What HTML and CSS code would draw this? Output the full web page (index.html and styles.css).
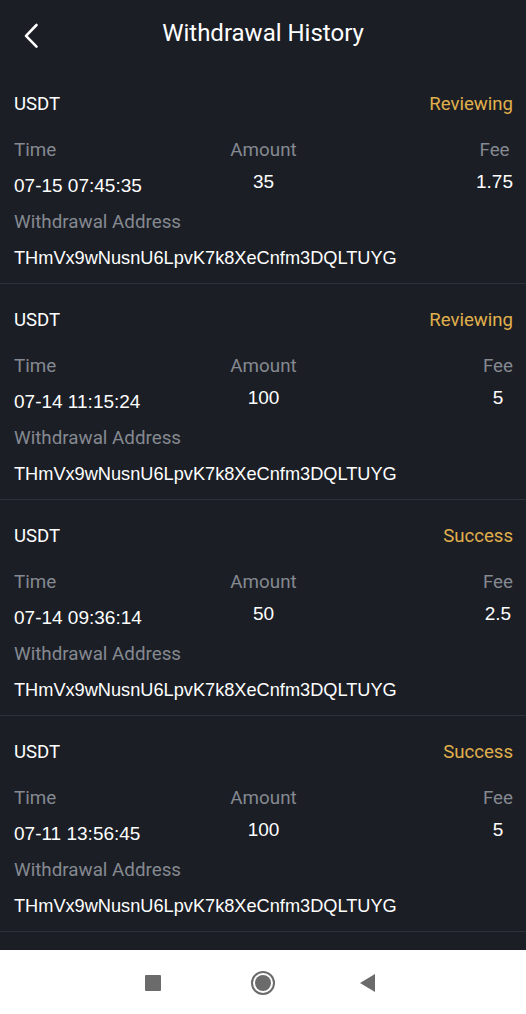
FILE: index.html
```html
<!DOCTYPE html>
<html>
<head>
<meta charset="utf-8">
<link rel="stylesheet" href="styles.css">
</head>
<body>
<div class="screen">
  <header class="topbar">
    <svg class="back" width="16" height="26" viewBox="0 0 16 26"><path d="M13.5 2 L3 12.8 L13.5 23.6" fill="none" stroke="#fff" stroke-width="2.6" stroke-linecap="round" stroke-linejoin="round"/></svg>
    <h1 class="title">Withdrawal History</h1>
  </header>
  <main class="list">
    <section class="card">
      <div class="head"><span class="coin">USDT</span><span class="status">Reviewing</span></div>
      <div class="cols">
        <div class="col col-left"><span class="label">Time</span><span class="value">07-15 07:45:35</span></div>
        <div class="col col-mid"><span class="label">Amount</span><span class="value">35</span></div>
        <div class="col col-right"><span class="label">Fee</span><span class="value">1.75</span></div>
      </div>
      <div class="label addr-label">Withdrawal Address</div>
      <div class="addr">THmVx9wNusnU6LpvK7k8XeCnfm3DQLTUYG</div>
    </section>
    <section class="card">
      <div class="head"><span class="coin">USDT</span><span class="status">Reviewing</span></div>
      <div class="cols">
        <div class="col col-left"><span class="label">Time</span><span class="value">07-14 11:15:24</span></div>
        <div class="col col-mid"><span class="label">Amount</span><span class="value">100</span></div>
        <div class="col col-right"><span class="label">Fee</span><span class="value">5</span></div>
      </div>
      <div class="label addr-label">Withdrawal Address</div>
      <div class="addr">THmVx9wNusnU6LpvK7k8XeCnfm3DQLTUYG</div>
    </section>
    <section class="card">
      <div class="head"><span class="coin">USDT</span><span class="status">Success</span></div>
      <div class="cols">
        <div class="col col-left"><span class="label">Time</span><span class="value">07-14 09:36:14</span></div>
        <div class="col col-mid"><span class="label">Amount</span><span class="value">50</span></div>
        <div class="col col-right"><span class="label">Fee</span><span class="value">2.5</span></div>
      </div>
      <div class="label addr-label">Withdrawal Address</div>
      <div class="addr">THmVx9wNusnU6LpvK7k8XeCnfm3DQLTUYG</div>
    </section>
    <section class="card">
      <div class="head"><span class="coin">USDT</span><span class="status">Success</span></div>
      <div class="cols">
        <div class="col col-left"><span class="label">Time</span><span class="value">07-11 13:56:45</span></div>
        <div class="col col-mid"><span class="label">Amount</span><span class="value">100</span></div>
        <div class="col col-right"><span class="label">Fee</span><span class="value">5</span></div>
      </div>
      <div class="label addr-label">Withdrawal Address</div>
      <div class="addr">THmVx9wNusnU6LpvK7k8XeCnfm3DQLTUYG</div>
    </section>
  </main>
  <nav class="navbar">
    <svg class="nav-square" width="18" height="18" viewBox="0 0 18 18"><rect x="1" y="1" width="16" height="16" rx="1" fill="#6b6b6b"/></svg>
    <svg class="nav-home" width="26" height="26" viewBox="0 0 26 26"><circle cx="13" cy="13" r="11" fill="none" stroke="#6b6b6b" stroke-width="2"/><circle cx="13" cy="13" r="8" fill="#6b6b6b"/></svg>
    <svg class="nav-back" width="18" height="20" viewBox="0 0 18 20"><path d="M16 1 L16 19 L1 10 Z" fill="#6b6b6b"/></svg>
  </nav>
</div>
</body>
</html>
```
FILE: styles.css
```css
* { box-sizing: border-box; margin: 0; padding: 0; }
html, body { background: #1b1e25; }
body { width: 526px; height: 1014px; overflow: hidden; font-family: Roboto, "Liberation Sans", sans-serif; }
.screen { display: flex; flex-direction: column; height: 1014px; }
.topbar { height: 68px; display: flex; align-items: center; justify-content: center; position: relative; }
.back { position: absolute; left: 23px; top: 23px; }
.title { font-weight: 400; font-size: 24px; color: #fff; line-height: 28px; margin-top: -2px; }
.list { flex: 1; }
.card { padding: 22px 13px 0 14px; border-bottom: 1px solid #2c3038; height: 216px; }
.head { display: flex; justify-content: space-between; align-items: center; height: 28px; }
.coin { color: #fff; font-size: 18.6px; }
.status { color: #e0b04c; font-size: 18.6px; }
.label { color: #858991; font-size: 18.8px; line-height: 28px; }
.cols { display: grid; grid-template-columns: 1fr auto 1fr; margin-top: 18px; }
.col { display: flex; flex-direction: column; gap: 7px; }
.col-left { align-items: flex-start; }
.col-mid { align-items: center; }
.col-right { align-items: center; justify-self: end; }
.value { color: #fff; font-family: "Liberation Sans", Arial, sans-serif; font-size: 19px; line-height: 28px; }
.col-left .value { margin-top: 1px; }
.col-mid .value { margin-top: -3px; }
.col-right .value { margin-top: -3px; }
.addr-label { margin-top: 8px; }
.addr { color: #fff; font-size: 18.2px; line-height: 28px; margin-top: 8px; font-family: "Liberation Sans", Arial, sans-serif; }
.navbar { height: 64px; background: #fff; display: flex; align-items: center; padding-left: 144px; padding-top: 2px; }
.nav-home { margin-left: 88px; }
.nav-back { margin-left: 83px; }
```
